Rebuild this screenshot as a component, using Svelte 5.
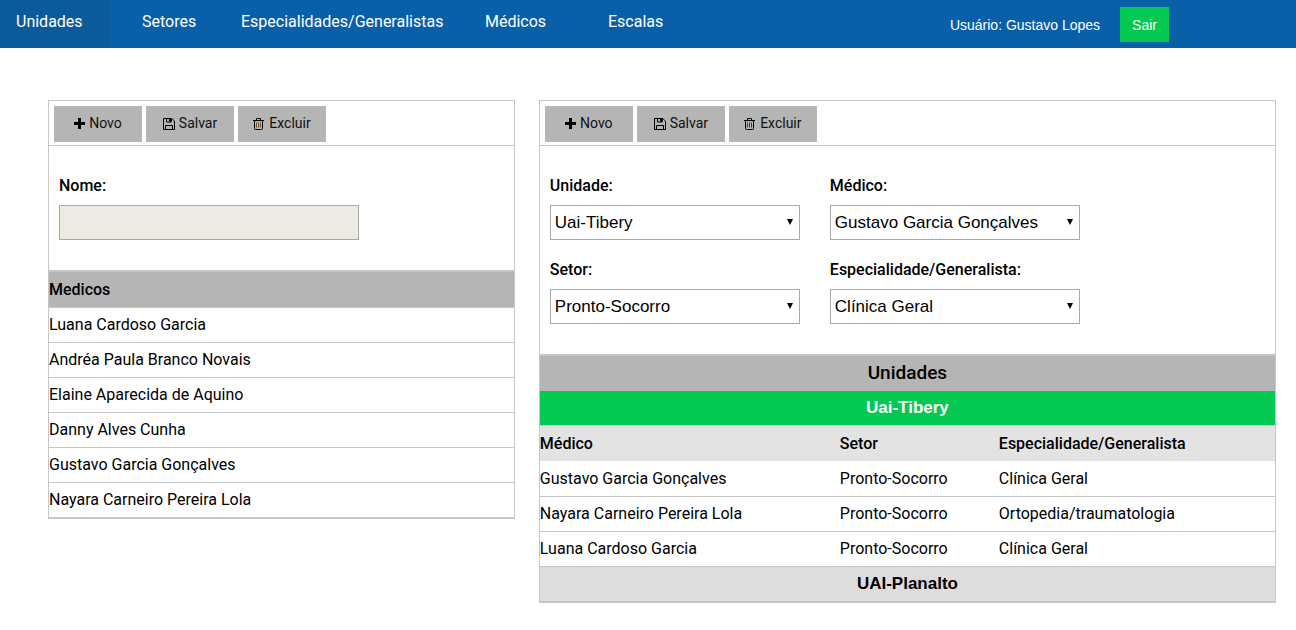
<script>
  const menu = ['Unidades', 'Setores', 'Especialidades/Generalistas', 'Médicos', 'Escalas'];
  let active = $state('Unidades');

  const doctors = [
    'Luana Cardoso Garcia',
    'Andréa Paula Branco Novais',
    'Elaine Aparecida de Aquino',
    'Danny Alves Cunha',
    'Gustavo Garcia Gonçalves',
    'Nayara Carneiro Pereira Lola'
  ];

  const fields = [
    { id: 'unidade', label: 'Unidade:', options: ['Uai-Tibery', 'UAI-Planalto'] },
    { id: 'medico', label: 'Médico:', options: ['Gustavo Garcia Gonçalves', 'Nayara Carneiro Pereira Lola', 'Luana Cardoso Garcia'] },
    { id: 'setor', label: 'Setor:', options: ['Pronto-Socorro'] },
    { id: 'especialidade', label: 'Especialidade/Generalista:', options: ['Clínica Geral', 'Ortopedia/traumatologia'] }
  ];

  const assignments = [
    ['Gustavo Garcia Gonçalves', 'Pronto-Socorro', 'Clínica Geral'],
    ['Nayara Carneiro Pereira Lola', 'Pronto-Socorro', 'Ortopedia/traumatologia'],
    ['Luana Cardoso Garcia', 'Pronto-Socorro', 'Clínica Geral']
  ];
</script>

{#snippet toolbar(trash)}
  <div class="toolbar">
    <button type="button">
      <svg width="11" height="12" viewBox="0 0 11 12" aria-hidden="true">
        <path d="M4 0h3v4h4v3H7v4H4V7H0V4h4z" fill="#000" />
      </svg>
      Novo
    </button>
    <button type="button">
      <svg width="12" height="12" viewBox="0 0 12 12" fill="none" stroke="#000" aria-hidden="true">
        <path d="M.5.5h8.300l2.700 2.700v8.300H.5zM2.500 11.500v-4h7v4M3.500.5v3.500h4.800V.5" />
        <path d="M6 1h2v2.500H6z" fill="#000" stroke="none" />
      </svg>
      Salvar
    </button>
    <button type="button">
      <svg width="12" height="12" viewBox="0 0 12 12" fill="none" stroke="#000" aria-hidden="true">
        <path d="M3.500 4.500v5M5.500 4.500v5M7.500 4.500v5" stroke={trash} />
        <path d="M0 2.500h11M3.500 2.500v-2h4v2M1.500 2.500v8q0 1 1 1h6q1 0 1-1v-8" />
      </svg>
      Excluir
    </button>
  </div>
{/snippet}

<header>
  <nav>
    {#each menu as item}
      <a href="#{item}" class:active={item === active} onclick={() => (active = item)}>{item}</a>
    {/each}
  </nav>
  <div class="user">
    <span>Usuário: Gustavo Lopes</span>
    <button type="button">Sair</button>
  </div>
</header>

<main>
  <section class="panel">
    {@render toolbar('#76562c')}
    <div class="form">
      <div class="field name">
        <label for="nome">Nome:</label>
        <input id="nome" type="text" disabled />
      </div>
    </div>
    <table class="doctors">
      <thead><tr><th>Medicos</th></tr></thead>
      <tbody>
        {#each doctors as doctor}
          <tr><td>{doctor}</td></tr>
        {/each}
      </tbody>
    </table>
  </section>

  <section class="panel">
    {@render toolbar('#5c2a6c')}
    <div class="form">
      {#each fields as field}
        <div class="field">
          <label for={field.id}>{field.label}</label>
          <div class="select">
            <select id={field.id}>
              {#each field.options as option}<option>{option}</option>{/each}
            </select>
            <svg width="6" height="6" viewBox="0 0 6 6" aria-hidden="true"><path d="M0 0h6L3 6z" /></svg>
          </div>
        </div>
      {/each}
    </div>
    <div class="units">
      <h2>Unidades</h2>
      <button type="button" class="unit open">Uai-Tibery</button>
      <table class="staff">
        <colgroup><col class="who" /><col class="where" /><col /></colgroup>
        <thead><tr><th>Médico</th><th>Setor</th><th>Especialidade/Generalista</th></tr></thead>
        <tbody>
          {#each assignments as row}
            <tr>{#each row as cell}<td>{cell}</td>{/each}</tr>
          {/each}
        </tbody>
      </table>
      <button type="button" class="unit">UAI-Planalto</button>
    </div>
  </section>
</main>

<style>
  :global(body) {
    margin: 0;
    background: #fff;
    color: #000;
    font: 16px/20px Roboto, sans-serif;
  }
  * { box-sizing: border-box; }
  button { border: 0; border-radius: 0; cursor: pointer; }

  header {
    display: flex;
    justify-content: space-between;
    height: 48px;
    padding-right: 127px;
    background: #0a60a8;
    color: #fff;
  }
  nav {
    display: grid;
    grid-template-columns: 126px 99px 244px 123px auto;
  }
  nav a {
    justify-self: start;
    padding: 12px 27px 16px 16px;
    color: #fff;
    text-decoration: none;
    white-space: nowrap;
  }
  nav a.active { background: #0b5a9a; }
  .user {
    display: flex;
    align-items: center;
    gap: 20px;
    font: 14px/20px "Liberation Sans", Arial, sans-serif;
  }
  .user span { padding-top: 2px; }
  .user button {
    height: 35px;
    padding: 2px 12px 0;
    background: #03c953;
    color: #fff;
    font: inherit;
  }

  main {
    display: grid;
    grid-template-columns: 38fr 60fr;
    align-items: start;
    gap: 24px;
    padding: 52px 20px 24px 48px;
  }
  .panel { border: 1px solid #c6c6c6; }
  .toolbar {
    display: flex;
    gap: 4px;
    height: 45px;
    padding: 5px 5px 3px;
    border-bottom: 1px solid #c6c6c6;
  }
  .toolbar button {
    display: flex;
    align-items: center;
    justify-content: center;
    gap: 4px;
    width: 88px;
    padding: 0 0 2px;
    background: #b5b5b5;
    color: #111;
    font: 14px/20px Roboto, sans-serif;
  }
  .toolbar svg { margin-top: 2px; }

  .form {
    display: flex;
    flex-wrap: wrap;
    gap: 20px 30px;
    padding: 30px 10px;
  }
  .field { width: 250px; }
  .field.name { width: 300px; }
  label {
    display: block;
    margin-bottom: 9px;
    font-weight: 500;
  }
  input, select {
    display: block;
    width: 100%;
    height: 35px;
    padding: 0 4px;
    border: 1px solid #a9a9a9;
    border-radius: 0;
    font: 17px/20px "Liberation Sans", Arial, sans-serif;
  }
  input { background: #ebebe4; }
  select { appearance: none; background: #fff; color: #000; }
  .select { position: relative; }
  .select svg {
    position: absolute;
    right: 7px;
    top: 14px;
    pointer-events: none;
  }

  table {
    width: 100%;
    border-collapse: separate;
    border-spacing: 0;
    table-layout: fixed;
  }
  th, td { height: 35px; padding: 0; text-align: left; }
  th { font-weight: 500; }
  td { font-weight: 400; }

  .doctors {
    border-top: 2px solid #c6c6c6;
    border-bottom: 1px solid #c6c6c6;
  }
  .doctors th { background: #b5b5b5; }
  .doctors td { border-top: 1px solid #c6c6c6; }

  .units {
    border-top: 2px solid #c6c6c6;
    border-bottom: 1px solid #c6c6c6;
  }
  h2 {
    margin: 0;
    padding-bottom: 2px;
    background: #b5b5b5;
    font-size: 19px;
    font-weight: 500;
    line-height: 33px;
    text-align: center;
  }
  .unit {
    display: block;
    width: 100%;
    height: 35px;
    padding: 0;
    border-top: 1px solid #c6c6c6;
    background: #ddd;
    color: #000;
    font: bold 17px/20px "Liberation Sans", Arial, sans-serif;
  }
  .unit.open {
    border-top: 0;
    border-bottom: 1px solid #c6c6c6;
    background: #03c953;
    color: #fff;
  }
  .who { width: 300px; }
  .where { width: 159px; }
  .staff th { background: #e3e3e3; }
  .staff td { border-top: 1px solid #c6c6c6; }
  .staff tbody tr:first-child td { border-top-color: #fff; }
</style>
